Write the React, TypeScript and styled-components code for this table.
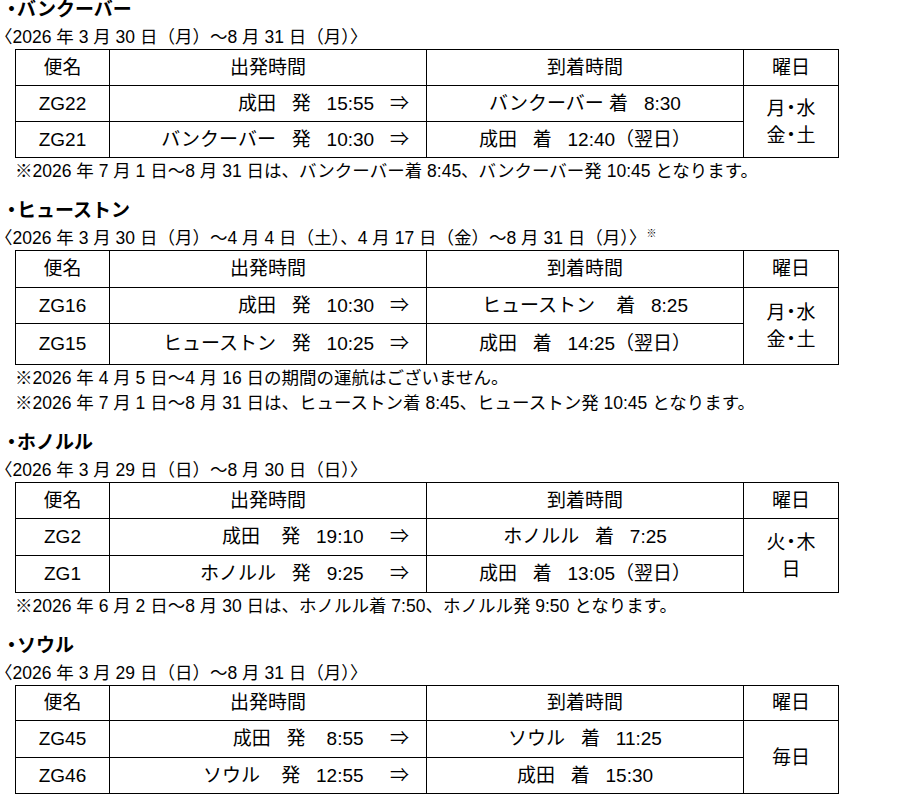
import React from 'react'
import styled, { createGlobalStyle } from 'styled-components'

type Flight = { no: string; dep: string; arr: string }

type Route = {
  title: string
  period: string
  mark?: boolean
  rows: number[]
  flights: Flight[]
  days: string[]
  notes: string[]
}

const routes: Route[] = [
  {
    title: '・バンクーバー',
    period: '〈2026 年 3 月 30 日（月）〜8 月 31 日（月）〉',
    rows: [36, 36, 36],
    flights: [
      { no: 'ZG22', dep: '成田   発   15:55   ⇒', arr: 'バンクーバー 着   8:30' },
      { no: 'ZG21', dep: 'バンクーバー   発   10:30   ⇒', arr: '成田   着   12:40（翌日）' },
    ],
    days: ['月・水', '金・土'],
    notes: ['※2026 年 7 月 1 日〜8 月 31 日は、バンクーバー着 8:45、バンクーバー発 10:45 となります。'],
  },
  {
    title: '・ヒューストン',
    period: '〈2026 年 3 月 30 日（月）〜4 月 4 日（土）、4 月 17 日（金）〜8 月 31 日（月）〉',
    mark: true,
    rows: [37, 36, 41],
    flights: [
      { no: 'ZG16', dep: '成田   発   10:30   ⇒', arr: 'ヒューストン    着   8:25' },
      { no: 'ZG15', dep: 'ヒューストン   発   10:25   ⇒', arr: '成田   着   14:25（翌日）' },
    ],
    days: ['月・水', '金・土'],
    notes: [
      '※2026 年 4 月 5 日〜4 月 16 日の期間の運航はございません。',
      '※2026 年 7 月 1 日〜8 月 31 日は、ヒューストン着 8:45、ヒューストン発 10:45 となります。',
    ],
  },
  {
    title: '・ホノルル',
    period: '〈2026 年 3 月 29 日（日）〜8 月 30 日（日）〉',
    rows: [36, 37, 37],
    flights: [
      { no: 'ZG2', dep: '成田    発   19:10     ⇒', arr: 'ホノルル   着   7:25' },
      { no: 'ZG1', dep: 'ホノルル   発   9:25     ⇒', arr: '成田   着   13:05（翌日）' },
    ],
    days: ['火・木', '日'],
    notes: ['※2026 年 6 月 2 日〜8 月 30 日は、ホノルル着 7:50、ホノルル発 9:50 となります。'],
  },
  {
    title: '・ソウル',
    period: '〈2026 年 3 月 29 日（日）〜8 月 31 日（月）〉',
    rows: [35, 37, 36],
    flights: [
      { no: 'ZG45', dep: '成田   発    8:55     ⇒', arr: 'ソウル   着   11:25' },
      { no: 'ZG46', dep: 'ソウル    発   12:55     ⇒', arr: '成田   着   15:30' },
    ],
    days: ['毎日'],
    notes: [],
  },
]

// the middle dot is drawn narrow in the source document
const withDots = (text: string) =>
  text.split('・').map((part, i) => (
    <React.Fragment key={i}>
      {i > 0 && <Dot>・</Dot>}
      {part}
    </React.Fragment>
  ))

const App: React.FC = () => (
  <>
    <GlobalStyle />
    <Page>
      {routes.map((r) => (
        <Section key={r.title}>
          <Title>{withDots(r.title)}</Title>
          <Period>
            {r.period}
            {r.mark && <Mark>※</Mark>}
          </Period>
          <Table>
            <colgroup>
              <col style={{ width: 94 }} />
              <col style={{ width: 317 }} />
              <col style={{ width: 317 }} />
              <col style={{ width: 95 }} />
            </colgroup>
            <tbody>
              <Row $h={r.rows[0]}>
                <Cell>便名</Cell>
                <Cell>出発時間</Cell>
                <Cell>到着時間</Cell>
                <Cell>曜日</Cell>
              </Row>
              {r.flights.map((f, i) => (
                <Row key={f.no} $h={r.rows[i + 1]}>
                  <Cell>{f.no}</Cell>
                  <DepCell>{f.dep}</DepCell>
                  <Cell>{f.arr}</Cell>
                  {i === 0 && (
                    <DaysCell rowSpan={2}>
                      {r.days.map((d) => (
                        <div key={d}>{withDots(d)}</div>
                      ))}
                    </DaysCell>
                  )}
                </Row>
              ))}
            </tbody>
          </Table>
          {r.notes.length > 0 && (
            <Notes>
              {r.notes.map((n) => (
                <div key={n}>{n}</div>
              ))}
            </Notes>
          )}
        </Section>
      ))}
    </Page>
  </>
)

const GlobalStyle = createGlobalStyle`
  body {
    margin: 0;
    background: #fff;
    color: #000;
    font-family: "Liberation Sans", "Noto Sans CJK JP", sans-serif;
  }
`

const Page = styled.div`
  width: 913px;
  padding-left: 15px;
  box-sizing: border-box;
`

const Section = styled.section`
  display: flex;
  flex-direction: column;
  align-items: flex-start;
  & + & {
    margin-top: 17px;
  }
`

const Title = styled.div`
  margin-left: -9px;
  font-size: 19px;
  font-weight: bold;
  line-height: 20px;
`

const Dot = styled.span`
  margin: 0 -4px;
`

const Period = styled.div`
  margin: 5px 0 0 -20px;
  font-size: 17.5px;
  line-height: 24px;
  white-space: nowrap;
`

const Mark = styled.sup`
  font-size: 10px;
  vertical-align: 7px;
  line-height: 0;
`

const Table = styled.table`
  border-collapse: collapse;
  table-layout: fixed;
  width: 824px;
  font-size: 19px;
`

const Row = styled.tr<{ $h: number }>`
  height: ${(p) => p.$h}px;
`

const Cell = styled.td`
  border: 1px solid #000;
  padding: 0;
  text-align: center;
  vertical-align: middle;
  white-space: pre;
  line-height: 22px;
`

const DepCell = styled(Cell)`
  text-align: right;
  padding-right: 17px;
`

const DaysCell = styled(Cell)`
  line-height: 27px;
`

const Notes = styled.div`
  padding-top: 1px;
  font-size: 17.5px;
  line-height: 25px;
  white-space: nowrap;
`

export default App
